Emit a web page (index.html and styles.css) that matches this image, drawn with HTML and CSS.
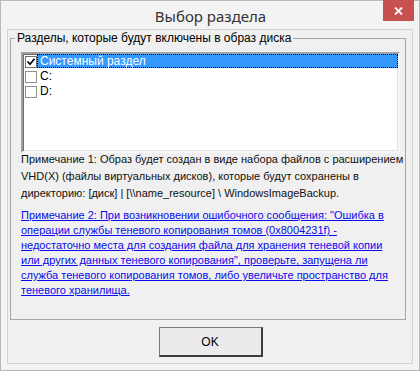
FILE: index.html
```html
<!DOCTYPE html>
<html lang="ru">
<head>
<meta charset="utf-8">
<title>Выбор раздела</title>
<link rel="stylesheet" href="styles.css">
</head>
<body>
<div class="window">
  <div class="titlebar">
    <span class="title">Выбор раздела</span>
    <button class="close" aria-label="Закрыть"><svg width="9" height="8" viewBox="0 0 9 8"><path d="M1 0.5 L8 7.5 M8 0.5 L1 7.5" stroke="#fff" stroke-width="1.8" fill="none"/></svg></button>
  </div>
  <div class="client">
    <fieldset class="group">
      <legend class="legend">Разделы, которые будут включены в образ диска</legend>
      <div class="listbox">
        <div class="row">
          <span class="check checked"><svg width="10" height="10" viewBox="0 0 10 10"><path d="M1.5 4.5 L4 7.2 L8.6 1.8" stroke="#000" stroke-width="1.7" fill="none"/></svg></span>
          <span class="label selected">Системный раздел</span>
        </div>
        <div class="row">
          <span class="check"></span>
          <span class="label">C:</span>
        </div>
        <div class="row">
          <span class="check"></span>
          <span class="label">D:</span>
        </div>
      </div>
      <p class="note">Примечание 1: Образ будет создан в виде набора файлов с расширением<br>VHD(X) (файлы виртуальных дисков), которые будут сохранены в<br>директорию: [диск] | [\\name_resource] \ WindowsImageBackup.</p>
      <p class="note link"><a href="#">Примечание 2: При возникновении ошибочного сообщения: "Ошибка в<br>операции службы теневого копирования томов (0x8004231f) -<br>недостаточно места для создания файла для хранения теневой копии<br>или других данных теневого копирования", проверьте, запущена ли<br>служба теневого копирования томов, либо увеличьте пространство для<br>теневого хранилища.</a></p>
    </fieldset>
    <div class="buttons">
      <button class="ok">OK</button>
    </div>
  </div>
</div>
</body>
</html>
```
FILE: styles.css
```css
* { box-sizing: border-box; }
html, body { margin: 0; padding: 0; background: #f3f3f3; }
body { font-family: "Liberation Sans", Arial, sans-serif; }

.window {
  position: relative;
  width: 420px;
  height: 371px;
  border: 1px solid #b9b9b9;
  background: #f3f3f3;
  padding: 0 6px 6px 6px;
  display: flex;
  flex-direction: column;
}

.titlebar {
  height: 28px;
  display: flex;
  align-items: center;
  justify-content: center;
}
.title {
  font-family: "Noto Sans", "Open Sans", sans-serif;
  font-size: 15px;
  color: #333;
  margin-top: 1px;
  margin-left: 1px;
}
.close {
  position: absolute;
  top: -1px;
  right: 5px;
  width: 31px;
  height: 21px;
  border: 0;
  padding: 0;
  background: #c75050;
  display: flex;
  align-items: center;
  justify-content: center;
}
.close svg { display: block; margin-top: 1px; }

.client {
  flex: 1;
  border: 1px solid #d2d2d2;
  background: #f0f0f0;
  display: flex;
  flex-direction: column;
}

.group {
  flex: 1;
  min-width: 0;
  margin: 1px 6px 0 2px;
  border: 1px solid #a8a8a8;
  padding: 5px 5px 0 10px;
  font-size: 11px;
}
.legend {
  margin-left: -6px;
  padding: 0 2px;
  font-size: 12px;
  line-height: 15px;
  color: #000;
}

.listbox {
  height: 101px;
  margin-top: 1px;
  background: #fff;
  border: 2px solid;
  border-color: #a0a0a0 #f7f7f7 #f7f7f7 #a0a0a0;
  box-shadow: inset 1px 1px 0 #6d6d6d, inset -1px -1px 0 #e3e3e3;
}
.row {
  height: 15px;
  display: flex;
  align-items: flex-start;
  font-size: 12px;
  line-height: 14px;
}
.check {
  width: 12px;
  height: 12px;
  margin: 2px 0 0 2px;
  border: 1px solid #8f8f8f;
  background: #fff;
  display: flex;
  align-items: center;
  justify-content: center;
}
.check.checked { border-color: #707070; }
.check svg { display: block; }
.label {
  padding: 0 0 0 3px;
  color: #000;
  height: 14px;
}
.label.selected {
  flex: 1;
  background: #3399ff;
  color: #fff;
  outline: 1px dotted #000;
  outline-offset: -1px;
}

.note {
  margin: -2px 0 0 0;
  font-size: 11px;
  line-height: 17px;
  color: #111;
  white-space: nowrap;
}
.note.link {
  margin-top: 6px;
  line-height: 15px;
}
.note.link a {
  color: #0a0aee;
  text-decoration: underline;
}

.buttons {
  height: 43px;
  display: flex;
  justify-content: center;
  padding-top: 7px;
}
.ok {
  width: 104px;
  height: 30px;
  border: 1px solid #7a7a7a;
  border-right: 2px solid #3c3c3c;
  border-bottom: 2px solid #3c3c3c;
  background: #ebebeb;
  font-family: "Liberation Sans", Arial, sans-serif;
  font-size: 12px;
  color: #000;
  padding: 0;
  margin-left: 1px;
}
```
